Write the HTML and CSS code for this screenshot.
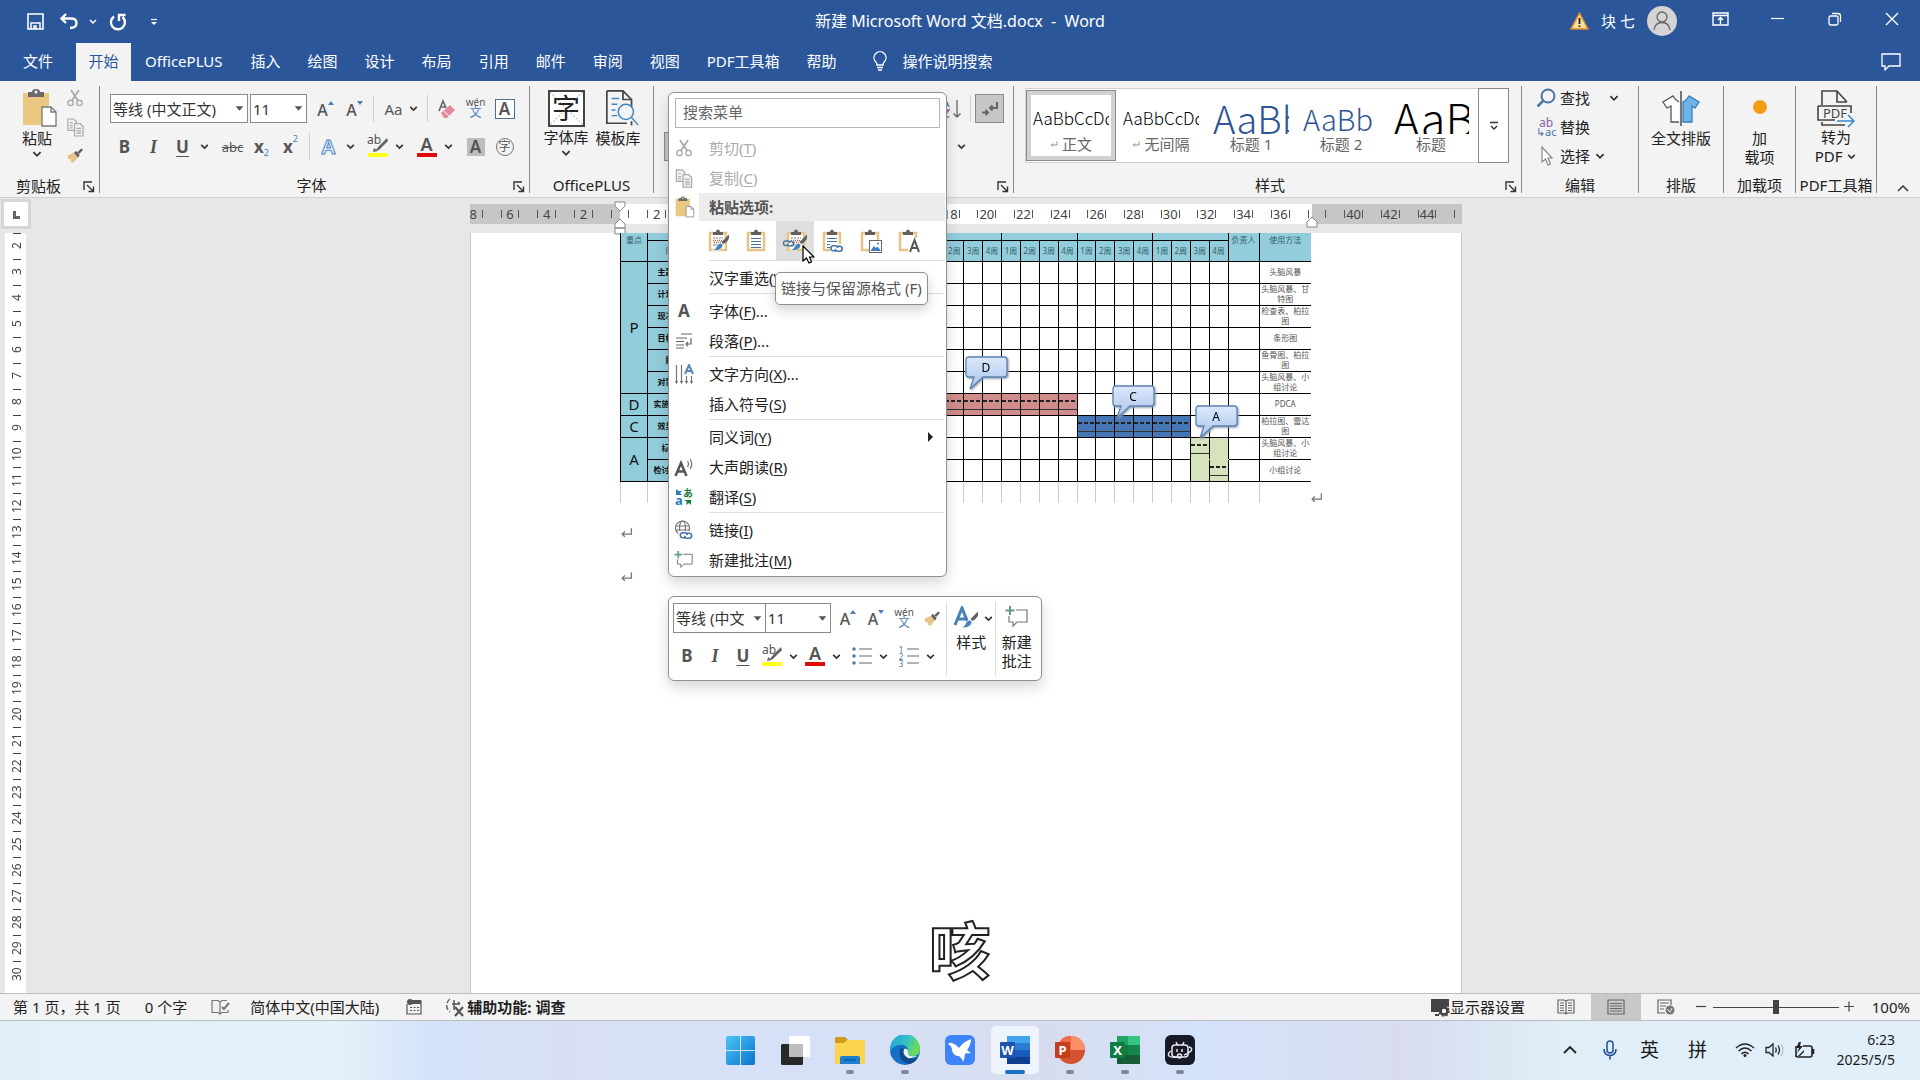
FILE: index.html
```html
<!DOCTYPE html>
<html lang="zh-CN">
<head>
<meta charset="utf-8">
<title>新建 Microsoft Word 文档.docx - Word</title>
<link rel="stylesheet" href="styles.css">
</head>
<body>
<svg class="defs" aria-hidden="true">
  <symbol id="chev" viewBox="0 0 10 10"><path d="M2 3.500 5 6.500 8 3.500" fill="none" stroke="#333" stroke-width="1.500"/></symbol>
  <symbol id="tri" viewBox="0 0 10 10"><path d="M1.500 3H8.500L5 7Z" fill="#555"/></symbol>
  <symbol id="launch" viewBox="0 0 12 12"><path d="M1 9V1H9M4 4 10 10M10.500 5.500V10.500H5.500" fill="none" stroke="#333" stroke-width="1.400"/></symbol>
  <symbol id="cut" viewBox="0 0 18 20"><g fill="none" stroke="#aaa" stroke-width="1.500"><circle cx="4" cy="15.500" r="3"/><circle cx="14" cy="15.500" r="3"/><path d="M5.500 13 13.500 1M12.500 13 4.500 1" stroke-width="2"/></g></symbol>
  <symbol id="copy" viewBox="0 0 18 20"><g fill="#f3f3f3" stroke="#aaa" stroke-width="1.300"><path d="M1 1H7L10 4V13H1Z"/><path d="M8 6H14L17 9V19H8Z"/><path d="M3 5H6M3 8H6M3 10.500H6M10 11H15M10 13.500H15M10 16H15"/></g></symbol>
  <symbol id="brush" viewBox="0 0 18 18"><path d="M1 9 8 6 12 11 7 17 4 15 5 13 2 13Z" fill="#e8c287"/><path d="M8 6 10 4 14 9 12 11ZM11.500 5.500 15.500 1.500 17.500 3 13.500 7.500Z" fill="#5d5d5d"/></symbol>
  <symbol id="paste" viewBox="0 0 36 40"><path d="M1 5H27V18H20V37H1Z" fill="#ebc882"/><path d="M6 9V4H10Q10 1 14 1Q18 1 18 4H22V9Z" fill="#6a6a6a"/><circle cx="14" cy="4" r="1.500" fill="#f3f3f3"/><path d="M20 19H29L34 24V38H20Z" fill="#fff" stroke="#777" stroke-width="1.300"/><path d="M29 19V24H34" fill="none" stroke="#777" stroke-width="1.300"/></symbol>
  <symbol id="clip" viewBox="0 0 22 24"><path d="M2 4H18V21H2Z" fill="#fff" stroke="#e6c487" stroke-width="2.500"/><path d="M5 6V3H8Q8 .5 10 .5Q12 .5 12 3H15V6Z" fill="#5f5f5f"/></symbol>
  <symbol id="lines" viewBox="0 0 22 24"><path d="M5 9.500H15M5 12.500H15M5 15.500H15M5 18.500H15" stroke="#4b6f95" stroke-width="1.200"/></symbol>
  <symbol id="dots" viewBox="0 0 22 24"><path d="M5 9H15" stroke="#777" stroke-dasharray="2 1"/><path d="M5 11.500H15M6 13.500H15" stroke="#b0664f" stroke-width="1.600" stroke-dasharray="1 1"/><path d="M5 16H10" stroke="#777"/></symbol>
  <symbol id="minibrush" viewBox="0 0 22 24"><path d="M21 5.500Q22 12 15.500 15L13.500 13Z" fill="#5f5f5f"/><path d="M13 14Q16 15 14.500 18Q11 23 4 21.500Q8 20 8.500 17.500Q10 14 13 14Z" fill="#4a7fb8" stroke="#fff" stroke-width=".8"/></symbol>
  <symbol id="link" viewBox="0 0 16 10"><g fill="none" stroke="#4375a8" stroke-width="1.800"><path d="M7.500 7.500H4A2.800 2.800 0 0 1 4 2H7Q9 2 9.500 4.500"/><path d="M8.500 2.500H12A2.800 2.800 0 0 1 12 8H9Q7 8 6.500 5.500"/></g></symbol>
  <symbol id="comment" viewBox="0 0 24 22"><path d="M11 4H22V16H12L8 20V16H4V10" fill="none" stroke="#777" stroke-width="1.200"/><path d="M5 0V9M.500 4.500H9.500" stroke="#5d9c85" stroke-width="2"/></symbol>
  <symbol id="hl" viewBox="0 0 22 20"><path d="M12 9 20 1 21 4 12 13 8 14Z" fill="#666"/><path d="M7 11 11 14 6 15Z" fill="#666"/><rect x="1" y="16" width="20" height="4" fill="#ffff1a"/></symbol>
  <symbol id="pilcrow" viewBox="0 0 12 10"><path d="M10.500 1V6.500H2M4.500 4 2 6.500 4.500 9" fill="none" stroke="#777" stroke-width="1.200"/></symbol>
</svg>

<header class="top">
  <div class="titlebar">
    <div class="quick">
      <button class="q" aria-label="保存"><svg width="17" height="17" viewBox="0 0 17 17"><path d="M1 1H16V16H1Z" fill="none" stroke="#fff" stroke-width="1.600"/><path d="M4 16V10H13V16M7 16V13H9V16" fill="none" stroke="#fff" stroke-width="1.500"/></svg></button>
      <button class="q" aria-label="撤消"><svg width="18" height="17" viewBox="0 0 18 17"><path d="M6 1 1.500 5.500 6 10M2 5.500H11Q16.500 5.500 16.500 10Q16.500 15 10 15" fill="none" stroke="#fff" stroke-width="2.300"/></svg></button>
      <button class="dd" aria-label="撤消选项"><svg width="10" height="10" viewBox="0 0 10 10"><path d="M2 3 5 6 8 3" fill="none" stroke="#fff" stroke-width="1.500"/></svg></button>
      <button class="q" aria-label="重复"><svg width="18" height="18" viewBox="0 0 18 18"><path d="M5 3.500A7 7 0 1 0 13.500 4M10 8V2H16.500" fill="none" stroke="#fff" stroke-width="2.400"/></svg></button>
      <button class="q" aria-label="自定义快速访问工具栏"><svg width="10" height="10" viewBox="0 0 10 10"><path d="M2 2.500H8" stroke="#fff" stroke-width="1.200"/><path d="M2 5H8L5 8Z" fill="#fff"/></svg></button>
    </div>
    <h1 class="doc-title">新建 Microsoft Word 文档.docx&nbsp; -&nbsp; Word</h1>
    <div class="account">
      <svg width="19" height="18" viewBox="0 0 19 18"><path d="M9.500 1 18 17H1Z" fill="#fbdf9c" stroke="#d98b2b" stroke-width="1.500"/><path d="M9.500 6V12M9.500 13.500V15" stroke="#222" stroke-width="1.800"/></svg>
      <span>块 七</span>
      <svg width="30" height="30" viewBox="0 0 30 30"><circle cx="15" cy="15" r="15" fill="#d4d4d4"/><g fill="none" stroke="#666" stroke-width="1.300"><circle cx="15" cy="11" r="5"/><path d="M7 24Q8 16.500 15 16.500T23 24"/></g></svg>
    </div>
    <div class="winctl">
      <button aria-label="功能区显示选项"><svg width="17" height="14" viewBox="0 0 17 14"><path d="M1 1H16V13H1ZM1 3.500H16M8.500 12V6M6 8 8.500 5.500 11 8" fill="none" stroke="#fff" stroke-width="1.400"/></svg></button>
      <button aria-label="最小化"><svg width="14" height="14" viewBox="0 0 14 14"><path d="M0 6.500H13" stroke="#fff" stroke-width="1.200"/></svg></button>
      <button aria-label="向下还原"><svg width="14" height="14" viewBox="0 0 14 14"><rect x="1" y="4" width="9" height="9" rx="1.500" fill="none" stroke="#fff" stroke-width="1.300"/><path d="M4 1.500H10Q12.500 1.500 12.500 4V10" fill="none" stroke="#fff" stroke-width="1.300"/></svg></button>
      <button aria-label="关闭"><svg width="14" height="14" viewBox="0 0 14 14"><path d="M1 1 13 13M13 1 1 13" stroke="#fff" stroke-width="1.400"/></svg></button>
    </div>
  </div>
  <nav class="tabs">
    <a class="tab file" href="#">文件</a><a class="tab cur" href="#">开始</a><a class="tab plus" href="#">OfficePLUS</a><a class="tab" href="#">插入</a><a class="tab" href="#">绘图</a><a class="tab" href="#">设计</a><a class="tab" href="#">布局</a><a class="tab" href="#">引用</a><a class="tab" href="#">邮件</a><a class="tab" href="#">审阅</a><a class="tab" href="#">视图</a><a class="tab" href="#">PDF工具箱</a><a class="tab" href="#">帮助</a>
    <a class="tab tell" href="#"><svg width="16" height="20" viewBox="0 0 16 20"><path d="M5 14Q5 12 3 10A6 6 0 1 1 13 10Q11 12 11 14Z" fill="none" stroke="#fff" stroke-width="1.300"/><path d="M5 16.500H11M6 19H10" stroke="#fff" stroke-width="1.300"/></svg>操作说明搜索</a>
    <button class="notes" aria-label="批注"><svg width="20" height="18" viewBox="0 0 20 18"><path d="M1 1H19V13H8L4 17V13H1Z" fill="none" stroke="#fff" stroke-width="1.300"/></svg></button>
  </nav>
</header>

<section class="ribbon">
  <div class="group g-clip">
    <div class="tools">
      <button class="big paste"><svg width="36" height="40"><use href="#paste"/></svg><span>粘贴</span><svg width="12" height="12"><use href="#chev"/></svg></button>
      <div class="stack">
        <button aria-label="剪切"><svg width="16" height="18"><use href="#cut"/></svg></button>
        <button aria-label="复制"><svg width="17" height="19"><use href="#copy"/></svg></button>
        <button aria-label="格式刷"><svg width="18" height="17"><use href="#brush"/></svg></button>
      </div>
    </div>
    <div class="cap">剪贴板</div><button class="launch" aria-label="剪贴板选项"><svg width="12" height="12"><use href="#launch"/></svg></button>
  </div>
  <div class="group g-font">
    <div class="rows">
      <div class="row">
        <div class="combo wide"><input type="text" value="等线 (中文正文)" aria-label="字体"><svg width="10" height="10"><use href="#tri"/></svg></div>
        <div class="combo"><input type="text" value="11" aria-label="字号"><svg width="10" height="10"><use href="#tri"/></svg></div>
        <button class="ib"><span class="grow">A<svg width="6" height="4" viewBox="0 0 6 4"><path d="M0 4H6L3 0Z" fill="#4a7fb8"/></svg></span></button>
        <button class="ib"><span class="grow">A<svg width="6" height="4" viewBox="0 0 6 4"><path d="M0 0H6L3 4Z" fill="#4a7fb8"/></svg></span></button>
        <i class="vs"></i>
        <button class="ib tight">Aa</button><button class="dd" aria-label="更改大小写"><svg width="11" height="11"><use href="#chev"/></svg></button>
        <i class="vs"></i>
        <button class="ib" aria-label="清除格式"><svg width="20" height="20" viewBox="0 0 20 20"><path d="M2 12 6 2 9 9M3.500 8H8" fill="none" stroke="#666" stroke-width="1.600"/><path d="M4 14 13 6 18 11 10 19H7Z" fill="#e58a9c"/><path d="M6.500 12 12 17" stroke="#fff"/></svg></button>
        <button class="ib wen"><small>wén</small><b>文</b></button>
        <button class="ib"><span class="boxed">A</span></button>
      </div>
      <div class="row">
        <button class="ib"><b>B</b></button><button class="ib"><b class="it">I</b></button><button class="ib"><b class="un">U</b></button><button class="dd" aria-label="下划线"><svg width="11" height="11"><use href="#chev"/></svg></button>
        <button class="ib strike">abc</button><button class="ib sub"><b>x</b><sub>2</sub></button><button class="ib sub"><b>x</b><sup>2</sup></button>
        <i class="vs"></i>
        <button class="ib"><span class="fx">A</span></button><button class="dd" aria-label="文本效果"><svg width="11" height="11"><use href="#chev"/></svg></button>
        <button class="ib hl"><small>ab</small><svg width="22" height="20"><use href="#hl"/></svg></button><button class="dd" aria-label="突出显示颜色"><svg width="11" height="11"><use href="#chev"/></svg></button>
        <button class="ib"><span class="fc">A</span></button><button class="dd" aria-label="字体颜色"><svg width="11" height="11"><use href="#chev"/></svg></button>
        <button class="ib"><span class="shade">A</span></button><button class="ib"><span class="circ">字</span></button>
      </div>
    </div>
    <div class="cap">字体</div><button class="launch" aria-label="字体选项"><svg width="12" height="12"><use href="#launch"/></svg></button>
  </div>
  <div class="group g-plus">
    <div class="tools">
      <button class="big"><span class="zi">字<svg width="36" height="36" viewBox="0 0 36 36"><path d="M0 0 36 36M36 0 0 36" stroke="#777" stroke-width=".8" stroke-dasharray="2 2"/></svg></span><span>字体库</span><svg width="12" height="12"><use href="#chev"/></svg></button>
      <button class="big tpl"><svg width="36" height="40" viewBox="0 0 36 40"><path d="M27 33V37M1 1H18L27 10V18M18 1V10H27M1 1V35H22" fill="none" stroke="#444" stroke-width="1.800"/><g fill="none" stroke="#3c87c4" stroke-width="1.500"><path d="M6 9H14M6 15H12M6 21H10M6 27H12"/><circle cx="21" cy="23" r="8"/><path d="M27 29 34 37"/></g></svg><span>模板库</span></button>
    </div>
    <div class="cap">OfficePLUS</div>
  </div>
  <div class="group g-para">
    <div class="rows end">
      <div class="row">
        <button class="ib" aria-label="排序"><svg width="22" height="22" viewBox="0 0 22 22"><path d="M2 9 5 2 8 9M3 7H7" fill="none" stroke="#4a7fb8" stroke-width="1.400"/><path d="M2.500 12H8L2.500 19H8" fill="none" stroke="#8b5fa8" stroke-width="1.400"/><path d="M16 2V19M12.500 15.500 16 19 19.500 15.500" fill="none" stroke="#666" stroke-width="1.300"/></svg></button>
        <i class="vs"></i>
        <button class="ib mark" aria-label="显示编辑标记"><svg width="18" height="18" viewBox="0 0 18 18"><path d="M16 2V8H9M11.500 5.500 9 8 11.500 10.500M1 12.500H7M4.500 10 7 12.500 4.500 15" fill="none" stroke="#666" stroke-width="2"/></svg></button>
      </div>
      <div class="row lower"><button class="ib on" aria-label="左对齐"></button><button class="dd" aria-label="边框"><svg width="11" height="11"><use href="#chev"/></svg></button></div>
    </div>
    <div class="cap"></div><button class="launch" aria-label="段落选项"><svg width="12" height="12"><use href="#launch"/></svg></button>
  </div>
  <div class="group g-style">
    <div class="gallery">
      <button class="st on"><span class="pv">AaBbCcDd</span><span class="nm"><svg width="8" height="8"><use href="#pilcrow"/></svg> 正文</span></button>
      <button class="st"><span class="pv">AaBbCcDd</span><span class="nm"><svg width="8" height="8"><use href="#pilcrow"/></svg> 无间隔</span></button>
      <button class="st"><span class="pv h1">AaBb</span><span class="nm">标题 1</span></button>
      <button class="st"><span class="pv h2">AaBb</span><span class="nm">标题 2</span></button>
      <button class="st"><span class="pv h0">AaBb</span><span class="nm">标题</span></button>
      <button class="more" aria-label="其他样式"><svg width="12" height="12" viewBox="0 0 12 12"><path d="M2 2.500H10M3 6 6 9 9 6" fill="none" stroke="#333" stroke-width="1.300"/></svg></button>
    </div>
    <div class="cap">样式</div><button class="launch" aria-label="样式选项"><svg width="12" height="12"><use href="#launch"/></svg></button>
  </div>
  <div class="group g-edit">
    <div class="list">
      <button><svg width="20" height="20" viewBox="0 0 20 20"><circle cx="12" cy="8" r="6.500" fill="none" stroke="#4a76a5" stroke-width="2"/><path d="M7.500 12.500 1.500 18.500" stroke="#4a76a5" stroke-width="2.500"/></svg><span>查找</span><svg class="far" width="12" height="12"><use href="#chev"/></svg></button>
      <button><span class="rep"><b>ab</b><i>↳ac</i></span><span>替换</span></button>
      <button><svg width="20" height="20" viewBox="0 0 20 20"><path d="M6 1V16L9.500 13 12 19 14.500 18 12 12H16Z" fill="#fff" stroke="#888" stroke-width="1.200"/></svg><span>选择</span><svg width="12" height="12"><use href="#chev"/></svg></button>
    </div>
    <div class="cap">编辑</div>
  </div>
  <div class="group g-lay">
    <div class="tools"><button class="big"><svg width="38" height="38" viewBox="0 0 38 38"><g stroke-width="1.300"><path d="M17 12Q13 10 11 6L1 12 5 18 9 16V32H17" fill="#fff" stroke="#555"/><path d="M21 12Q25 10 27 6L37 12 33 18 30 16V32H21Z" fill="#6db5e8" stroke="#3a7eb8"/><path d="M19 1V36" stroke="#333"/></g></svg><span>全文排版</span></button></div>
    <div class="cap">排版</div>
  </div>
  <div class="group g-add">
    <div class="tools"><button class="big"><svg width="36" height="38" viewBox="0 0 36 38"><circle cx="18" cy="17" r="7" fill="#f39c12"/></svg><span>加<br>载项</span></button></div>
    <div class="cap">加载项</div>
  </div>
  <div class="group g-pdf">
    <div class="tools"><button class="big"><span class="pdf">PDF<svg width="38" height="38" viewBox="0 0 38 38"><g fill="none" stroke="#444" stroke-width="1.600"><path d="M5 15V1H20L30 12M20 1V12H30M1 16H34V23M1 16V30H18M5 32V35H28"/></g><path d="M20 31H37M31 25 37 31 31 37" fill="none" stroke="#3c87c4" stroke-width="1.500"/></svg></span><span>转为<br>PDF <svg width="11" height="11"><use href="#chev"/></svg></span></button></div>
    <div class="cap">PDF工具箱</div>
  </div>
  <div class="collapse"><button aria-label="折叠功能区"><svg width="14" height="10" viewBox="0 0 14 10"><path d="M2 8 7 3 12 8" fill="none" stroke="#333" stroke-width="1.500"/></svg></button></div>
</section>

<main class="work">
  <div class="left">
    <div class="corner"><i></i></div>
    <div class="vruler" id="vruler"></div>
  </div>
  <div class="center">
    <div class="hruler" id="hruler">
      <svg class="grip" width="12" height="34" viewBox="0 0 12 34"><path d="M1 1H11V5L6 10 1 5ZM6 18 11 23V27H1V23ZM1 27H11V33H1Z" fill="#fff" stroke="#888"/></svg>
      <svg class="grip r" width="12" height="12" viewBox="0 0 12 12"><path d="M6 1 11 6V11H1V6Z" fill="#fff" stroke="#888"/></svg>
    </div>
    <article class="page">
      <div class="sheet">
        <table class="gantt">
          <colgroup><col class="c-phase"><col class="c-step"><col span="28"><col class="c-who"><col class="c-how"></colgroup>
          <thead id="ghead"></thead>
          <tbody id="gbody"></tbody>
        </table>
        <svg class="rowend" width="13" height="11"><use href="#pilcrow"/></svg>
        <svg class="call d" width="44" height="36" viewBox="0 0 44 36"><path d="M4 1H39Q42 1 42 4V18Q42 21 39 21H18L5 33 9 21H4Q1 21 1 18V4Q1 1 4 1Z" fill="url(#cg)" stroke="#5f83b5" stroke-width="1.300"/><text x="21" y="16" text-anchor="middle">D</text><defs><linearGradient id="cg" x1="0" y1="0" x2="0" y2="1"><stop offset="0" stop-color="#dce8fa"/><stop offset="1" stop-color="#a9c4ec"/></linearGradient></defs></svg>
        <svg class="call c" width="44" height="36" viewBox="0 0 44 36"><path d="M4 1H39Q42 1 42 4V18Q42 21 39 21H18L5 33 9 21H4Q1 21 1 18V4Q1 1 4 1Z" fill="url(#cg)" stroke="#5f83b5" stroke-width="1.300"/><text x="21" y="16" text-anchor="middle">C</text></svg>
        <svg class="call a" width="44" height="36" viewBox="0 0 44 36"><path d="M4 1H39Q42 1 42 4V18Q42 21 39 21H18L5 33 9 21H4Q1 21 1 18V4Q1 1 4 1Z" fill="url(#cg)" stroke="#5f83b5" stroke-width="1.300"/><text x="21" y="16" text-anchor="middle">A</text></svg>
      </div>
      <p class="para"><svg width="13" height="11"><use href="#pilcrow"/></svg></p>
      <p class="para"><svg width="13" height="11"><use href="#pilcrow"/></svg></p>
    </article>
  </div>
  <div class="caption">咳</div>
</main>

<footer class="status">
  <span class="s1">第 1 页，共 1 页</span>
  <span class="s2">0 个字</span>
  <svg class="s3" width="19" height="16" viewBox="0 0 19 16"><path d="M9 3V15L7 13.500H1V1.500H7ZM9 3 11 1.500H16M9 15 11 13.500H17V11" fill="none" stroke="#777" stroke-width="1.200"/><path d="M11 8 13 10 18 4" fill="none" stroke="#777" stroke-width="2"/></svg>
  <span class="s4">简体中文(中国大陆)</span>
  <svg class="s5" width="16" height="16" viewBox="0 0 16 16"><path d="M1 5V15H15V2H7" fill="none" stroke="#555" stroke-width="1.200"/><path d="M6 1H15V5H6Z" fill="#555"/><circle cx="4" cy="3" r="3" fill="#555"/><path d="M4 8.500H13M4 11.500H13" stroke="#555" stroke-dasharray="2 1.500"/></svg>
  <svg class="s6" width="20" height="19" viewBox="0 0 20 19"><path d="M5 1A8 8 0 0 0 5 14" fill="none" stroke="#666" stroke-width="1.500" stroke-dasharray="5 2"/><path d="M9 2V7M7 6H15M15 6 13 4M9 7V12" fill="none" stroke="#555" stroke-width="1.500"/><path d="M10 9 18 18M18 9 10 18" stroke="#555" stroke-width="2.200"/></svg>
  <b>辅助功能: 调查</b>
  <span class="grow-x"></span>
  <svg width="20" height="19" viewBox="0 0 20 19"><path d="M1 1H19V9Q12 7 10 14H1Z" fill="#444"/><path d="M5 17H9" stroke="#444" stroke-width="2"/><circle cx="14" cy="13" r="3.500" fill="none" stroke="#444" stroke-width="2.600"/><circle cx="14" cy="13" r="5" fill="none" stroke="#444" stroke-width="1.600" stroke-dasharray="2 1.900"/></svg>
  <span>显示器设置</span>
  <button class="view v1" aria-label="阅读视图"><svg width="18" height="16" viewBox="0 0 18 16"><path d="M9 2V15M9 2 7 1H1V14H8L9 15 10 14H17V1H11ZM3 4H7M3 6.500H7M3 9H7M3 11.500H7M11 4H15M11 6.500H15M11 9H15M11 11.500H15" fill="none" stroke="#666" stroke-width="1.200"/></svg></button>
  <button class="view on" aria-label="页面视图"><svg width="18" height="16" viewBox="0 0 18 16"><path d="M1 1H17V15H1ZM3 4.500H15M3 7H15M3 9.500H15M3 12H15" fill="none" stroke="#666" stroke-width="1.200"/></svg></button>
  <button class="view" aria-label="Web 版式视图"><svg width="18" height="16" viewBox="0 0 18 16"><path d="M8 14H1V1H14V6M3 4H12M3 7H9M3 10H7" fill="none" stroke="#666" stroke-width="1.200"/><circle cx="13" cy="11" r="4.500" fill="#777"/><path d="M10 10 13 13 15 9" fill="none" stroke="#eee"/></svg></button>
  <button class="zoomb" aria-label="缩小"><svg width="12" height="12" viewBox="0 0 12 12"><path d="M1 5.500H11" stroke="#444" stroke-width="1.200"/></svg></button>
  <input class="zoom" type="range" min="0" max="100" value="50" aria-label="显示比例">
  <button class="zoomb" aria-label="放大"><svg width="12" height="12" viewBox="0 0 12 12"><path d="M1 5.500H11M6 .5V10.500" stroke="#444" stroke-width="1.200"/></svg></button>
  <span class="pct">100%</span>
</footer>

<div class="taskbar">
  <div class="apps">
    <button aria-label="开始"><svg width="29" height="29" viewBox="0 0 29 29"><path d="M0 2Q0 0 2 0H14V14H0ZM15 0H27Q29 0 29 2V14H15ZM0 15H14V29H2Q0 29 0 27ZM15 15H29V27Q29 29 27 29H15Z" fill="url(#wg)"/><defs><linearGradient id="wg" x1="0" y1="0" x2="1" y2="1"><stop offset="0" stop-color="#4cc5f5"/><stop offset="1" stop-color="#0a73d0"/></linearGradient></defs></svg></button>
    <button aria-label="任务视图"><svg width="29" height="29" viewBox="0 0 29 29"><rect x="0" y="8" width="22" height="21" rx="1.500" fill="#282828"/><rect x="8" y="0" width="21" height="21" rx="1.500" fill="#fff"/><path d="M8 8H22V21H8Z" fill="#bdbdbd"/></svg></button>
    <button class="run" aria-label="文件资源管理器"><svg width="30" height="29" viewBox="0 0 30 29"><path d="M0 2Q0 1 1 1H10L13 4H12V8H0Z" fill="#d19a18"/><path d="M0 7H9L12 4H30V28H0Z" fill="#fbd34d"/><path d="M5 28V22Q5 20 7 20H23Q25 20 25 22V28Z" fill="#1b7fce"/><path d="M9 24H21" stroke="#0c5a9e" stroke-width="1.500"/></svg></button>
    <button class="run" aria-label="Edge"><svg width="30" height="30" viewBox="0 0 30 30"><defs><linearGradient id="eg" x1="0" y1="0" x2="1" y2=".4"><stop offset="0" stop-color="#1f9fe0"/><stop offset=".6" stop-color="#33c3c3"/><stop offset="1" stop-color="#6ddc57"/></linearGradient></defs><circle cx="15" cy="15" r="15" fill="#1470c4"/><path d="M0 14A15 15 0 0 1 30 14Q30 21 23 21Q18 21 17 18Q19 15 17 12Q14 9 9 10Q3 11 0 16Z" fill="url(#eg)"/><path d="M10 14Q7 27 20 29Q26 27 28 22Q22 25 17 22Q13 19 14 14Q12 12 10 14Z" fill="#104a8c"/><path d="M14 14Q12 20 18 23Q23 24 29 20Q26 22 21 21Q17 20 18 17Q18 13 14 14Z" fill="#e6f1fb"/></svg></button>
    <button aria-label="飞鸟"><svg width="30" height="30" viewBox="0 0 30 30"><rect width="30" height="30" rx="6" fill="#3f83f8"/><path d="M3 9Q5 7 8 8.500Q12 10 14 13Q18 7 26 4Q26 10 22 15L26 18 20 18.500Q20 23 18 27Q17 23 14 21Q8 21 7 15Q7 11 3 9Z" fill="#fff"/></svg></button>
    <button class="run cur" aria-label="Word"><svg width="30" height="30" viewBox="0 0 30 30"><path d="M7 1H30V8H7Z" fill="#41a5ee"/><path d="M7 8H30V15H7Z" fill="#2b7cd3"/><path d="M7 15H30V22H7Z" fill="#185abd"/><path d="M7 22H30V29H7Z" fill="#103f91"/><rect y="7" width="15" height="16" rx="1" fill="#1d55b0"/><text x="7.500" y="20" text-anchor="middle">W</text></svg></button>
    <button class="run" aria-label="PowerPoint"><svg width="30" height="30" viewBox="0 0 30 30"><circle cx="16" cy="15" r="14" fill="#d35230"/><path d="M16 1A14 14 0 0 0 2 15H16Z" fill="#ed6c47"/><path d="M16 1A14 14 0 0 1 30 15H16Z" fill="#ff8f6b"/><rect y="7" width="15" height="16" rx="1" fill="#c43e1c"/><text x="7.500" y="20" text-anchor="middle">P</text></svg></button>
    <button class="run" aria-label="Excel"><svg width="30" height="30" viewBox="0 0 30 30"><path d="M7 1H30V29H7Z" fill="#21a366"/><path d="M18 1H30V10H18Z" fill="#33c481"/><path d="M7 10H18V20H7Z" fill="#107c41"/><path d="M7 20H30V29H7Z" fill="#185c37"/><path d="M18 10H30V20H18Z" fill="#15864a"/><rect y="7" width="15" height="16" rx="1" fill="#107c41"/><text x="7.500" y="20" text-anchor="middle">X</text></svg></button>
    <button class="run" aria-label="哔哩哔哩"><svg width="30" height="30" viewBox="0 0 30 30"><rect width="30" height="30" rx="6" fill="#171a26"/><g fill="none" stroke="#e8e8ee" stroke-width="1.500"><rect x="7" y="10" width="16" height="12" rx="3"/><path d="M11 7 12.500 10M19 7 17.500 10M12 14V17M17 14V17M24 12Q28 13 26 16Q23 19 19 20M6 16Q2 19 4 21Q7 23 12 22"/><circle cx="14.500" cy="21" r="2"/></g></svg></button>
  </div>
  <div class="tray">
    <svg width="14" height="10" viewBox="0 0 14 10"><path d="M1 8 7 2 13 8" fill="none" stroke="#222" stroke-width="1.800"/></svg>
    <svg width="16" height="20" viewBox="0 0 16 20"><rect x="5" y="1" width="6" height="12" rx="3" fill="none" stroke="#24509a" stroke-width="1.500"/><path d="M2 9Q2 15.500 8 15.500T14 9M8 15.500V19.500" fill="none" stroke="#24509a" stroke-width="1.600"/></svg>
    <span class="ime">英</span><span class="ime">拼</span>
    <div class="sys">
      <svg width="20" height="16" viewBox="0 0 20 16"><g fill="none" stroke="#222" stroke-width="1.500"><path d="M1 6Q10-2 19 6M3.500 9Q10 3 16.500 9M6.500 12Q10 8.500 13.500 12"/></g><circle cx="10" cy="13.500" r="1.500" fill="#222"/></svg>
      <svg width="20" height="16" viewBox="0 0 20 16"><path d="M1 5.500H4L8 2V14L4 10.500H1Z" fill="none" stroke="#222" stroke-width="1.300"/><path d="M10.500 5.500Q12 8 10.500 10.500M13 3.500Q16 8 13 12.500" fill="none" stroke="#222" stroke-width="1.300"/><path d="M16 2Q20 8 16 14" fill="none" stroke="#bbb" stroke-width="1.200"/></svg>
      <svg width="20" height="17" viewBox="0 0 20 17"><path d="M8 4H15Q17 4 17 6V13Q17 15 15 15H3Q1 15 1 13V10M1 4V15M18.500 7V12" fill="none" stroke="#222" stroke-width="1.600"/><path d="M4 0 1 6H4L2 11 8 4H5L6 0ZM3 14 9 8V10L5 14Z" fill="#222"/></svg>
    </div>
    <div class="clock"><div>6:23</div><div>2025/5/5</div></div>
  </div>
</div>

<div class="menu" role="menu">
  <input class="find" type="text" placeholder="搜索菜单" aria-label="搜索菜单">
  <button class="mi off"><svg width="16" height="18"><use href="#cut"/></svg><span>剪切(<u>T</u>)</span></button>
  <button class="mi off"><svg width="17" height="19"><use href="#copy"/></svg><span>复制(<u>C</u>)</span></button>
  <div class="mh"><svg width="20" height="22" viewBox="0 0 36 40"><use href="#paste"/></svg><b>粘贴选项:</b></div>
  <div class="opts">
    <button aria-label="保留源格式"><svg width="22" height="24"><use href="#clip"/><use href="#dots"/><use href="#minibrush"/></svg></button>
    <button aria-label="使用目标样式"><svg width="22" height="24"><use href="#clip"/><use href="#lines"/></svg></button>
    <button class="on" aria-label="链接与保留源格式"><svg width="26" height="24" viewBox="-4 0 26 24"><use href="#clip" width="22" height="24"/><use href="#dots" width="22" height="24"/><use href="#minibrush" width="22" height="24"/><use href="#link" x="-4" y="10" width="13" height="9"/></svg></button>
    <button aria-label="链接与使用目标格式"><svg width="22" height="24"><use href="#clip"/><use href="#lines"/><rect x="8" y="15" width="14" height="9" fill="#fff"/><use href="#link" x="7" y="15" width="15" height="9"/></svg></button>
    <button aria-label="图片"><svg width="22" height="24"><use href="#clip"/><rect x="9.500" y="11.500" width="12" height="12" fill="#fff" stroke="#666"/><path d="M11 21 14 17 16 19 17.500 17.500 20.500 21V22H11Z" fill="#3f7fc0"/><circle cx="18" cy="14.500" r="1" fill="#3f7fc0"/></svg></button>
    <button aria-label="只保留文本"><svg width="22" height="24"><use href="#clip"/><rect x="10" y="9" width="12" height="15" fill="#fff"/><path d="M12 23 16.500 11 21 23M13.500 19H19.500" fill="none" stroke="#555" stroke-width="2"/></svg></button>
  </div>
  <hr>
  <button class="mi"><i></i><span>汉字重选(<u>V</u>)</span></button>
  <hr>
  <button class="mi"><i class="ga">A</i><span>字体(<u>F</u>)...</span></button>
  <button class="mi"><svg width="18" height="16" viewBox="0 0 18 16"><path d="M6 1H17M1 5H12M1 8.500H9M1 12H9M1 15H9M16 5V11H11M13 9 11 11 13 13.500" fill="none" stroke="#666" stroke-width="1.200"/></svg><span>段落(<u>P</u>)...</span></button>
  <hr>
  <button class="mi"><svg width="18" height="20" viewBox="0 0 18 20"><path d="M1.500 1V19M6.500 1V19M11.500 12V19M16.500 12V19" stroke="#777" stroke-width="1.200"/><path d="M0 17H3L1.500 20ZM5 17H8L6.500 20ZM10 17H13L11.500 20ZM15 17H18L16.500 20Z" fill="#666"/><path d="M10 10 14 1 18 10M11.500 7H16.500" fill="none" stroke="#5a86b5" stroke-width="2"/></svg><span>文字方向(<u>X</u>)...</span></button>
  <button class="mi"><i></i><span>插入符号(<u>S</u>)</span></button>
  <hr>
  <button class="mi"><i></i><span>同义词(<u>Y</u>)</span><svg class="sub-arrow" width="6" height="10" viewBox="0 0 6 10"><path d="M0 0 5 5 0 10Z" fill="#222"/></svg></button>
  <button class="mi"><svg width="19" height="19" viewBox="0 0 19 19"><path d="M1 18 6.500 5 12 18M3.500 13.500H9.500" fill="none" stroke="#555" stroke-width="2.500"/><path d="M13 3Q15 6 13 9M15.500 1Q19 6 15.500 11" fill="none" stroke="#777" stroke-width="1.300"/></svg><span>大声朗读(<u>R</u>)</span></button>
  <button class="mi"><svg class="tr" width="18" height="18" viewBox="0 0 18 18"><text class="ja" x="8" y="9">あ</text><text class="la" x="0" y="17">a</text><path d="M1 1V7H7L5 5 7 3H4L2 2Z" fill="#2b7cb8"/><path d="M9 12H16V17L14 15 11 17 12 14Z" fill="#18803a"/></svg><span>翻译(<u>S</u>)</span></button>
  <hr>
  <button class="mi"><svg width="19" height="20" viewBox="0 0 19 20"><g fill="none" stroke="#777" stroke-width="1.200"><circle cx="8" cy="8" r="7"/><ellipse cx="8" cy="8" rx="3" ry="7"/><path d="M1 6H15M1 10H15"/></g><rect x="4" y="11" width="15" height="9" fill="#fff"/><use href="#link" x="4" y="11" width="15" height="9"/></svg><span>链接(<u>I</u>)</span></button>
  <button class="mi"><svg width="20" height="18"><use href="#comment"/></svg><span>新建批注(<u>M</u>)</span></button>
</div>
<div class="tip" role="tooltip">链接与保留源格式 (F)</div>
<svg class="cursor" width="13" height="19" viewBox="0 0 13 19"><path d="M1 1V16L4.500 13 7 18 9.500 17 7.500 12H12Z" fill="#fff" stroke="#000" stroke-width="1.200"/></svg>

<div class="mini">
  <div class="mrows">
    <div class="row">
      <div class="combo"><input type="text" value="等线 (中文" aria-label="字体"><svg width="12" height="12"><use href="#tri"/></svg></div><div class="combo num"><input type="text" value="11" aria-label="字号"><svg width="12" height="12"><use href="#tri"/></svg></div>
      <button class="ib"><span class="grow">A<svg width="6" height="4" viewBox="0 0 6 4"><path d="M0 4H6L3 0Z" fill="#4a7fb8"/></svg></span></button>
      <button class="ib"><span class="grow">A<svg width="6" height="4" viewBox="0 0 6 4"><path d="M0 0H6L3 4Z" fill="#4a7fb8"/></svg></span></button>
      <button class="ib wen"><small>wén</small><b>文</b></button>
      <button class="ib" aria-label="格式刷"><svg width="18" height="17"><use href="#brush"/></svg></button>
    </div>
    <div class="row">
      <button class="ib"><b>B</b></button><button class="ib"><b class="it">I</b></button><button class="ib"><b class="un">U</b></button>
      <button class="ib hl"><small>ab</small><svg width="22" height="20"><use href="#hl"/></svg></button><button class="dd" aria-label="突出显示颜色"><svg width="11" height="11"><use href="#chev"/></svg></button>
      <button class="ib"><span class="fc">A</span></button><button class="dd" aria-label="字体颜色"><svg width="11" height="11"><use href="#chev"/></svg></button>
      <button class="ib lst" aria-label="项目符号"><svg width="20" height="18" viewBox="0 0 20 18"><path d="M7 2H20M7 9H20M7 16H20" stroke="#666" stroke-width="1.200"/><g fill="#4a76a5"><circle cx="2" cy="2" r="1.700"/><circle cx="2" cy="9" r="1.700"/><circle cx="2" cy="16" r="1.700"/></g></svg></button><button class="dd" aria-label="项目符号库"><svg width="11" height="11"><use href="#chev"/></svg></button>
      <button class="ib lst nums" aria-label="编号"><span>1<br>2<br>3</span><svg width="12" height="18" viewBox="0 0 12 18"><path d="M0 2H12M0 9H12M0 16H12" stroke="#666" stroke-width="1.200"/></svg></button><button class="dd" aria-label="编号库"><svg width="11" height="11"><use href="#chev"/></svg></button>
    </div>
  </div>
  <button class="mbig wide"><span class="styico"><svg width="26" height="24" viewBox="0 0 26 24"><path d="M2 19 9 2 15 17M5 13H13" fill="none" stroke="#4a7fb8" stroke-width="3"/><use href="#minibrush" x="4" y="0" width="22" height="24"/></svg><svg width="11" height="11"><use href="#chev"/></svg></span><span>样式</span></button>
  <button class="mbig"><svg width="24" height="22"><use href="#comment"/></svg><span>新建<br>批注</span></button>
</div>
<script src="app.js"></script>
</body>
</html>
```
FILE: styles.css
```css
* { box-sizing: border-box; }
body {
  margin: 0; min-height: 100vh; display: flex; flex-direction: column; position: relative; overflow: hidden;
  font-family: "Noto Sans", "Noto Sans CJK SC", sans-serif; font-size: 15px; line-height: 20px; color: #222; background: #e7e7e7;
}
button { font: inherit; color: inherit; background: none; border: 0; padding: 0; margin: 0; display: inline-flex; align-items: center; justify-content: center; }
input { font: inherit; color: inherit; margin: 0; }
a { color: inherit; text-decoration: none; }
svg { display: block; flex: none; }
.defs { position: absolute; width: 0; height: 0; }

/* Title bar and tabs */
.top { background: #2b579a; color: #fff; }
.titlebar { display: grid; grid-template-columns: 1fr auto 1fr; grid-template-rows: 43px; align-items: center; position: relative; }
.quick { display: flex; align-items: center; padding-left: 20px; height: 40px; }
.q { width: 30px; height: 30px; margin-right: 4px; }
.quick .dd { margin: 0 3px 0 -2px; }
.dd { width: 14px; height: 28px; }
.quick .q:last-child { margin-left: 2px; }
.doc-title { font-size: 16px; font-weight: 400; margin: 0; padding-bottom: 2px; }
.account { display: flex; align-items: center; gap: 12px; justify-self: end; margin-right: 243px; padding-bottom: 2px; }
.winctl { display: flex; position: absolute; right: 0; top: 0; height: 38px; }
.winctl button { width: 57px; height: 38px; }
.tabs { display: flex; height: 38px; }
.tab { display: flex; align-items: center; justify-content: center; padding: 0 13px 2px 14px; white-space: nowrap; }
.file { width: 76px; padding: 0 0 2px; }
.cur.tab { background: #f3f3f3; color: #2b579a; width: 55px; padding: 0 0 2px; }
.plus { padding: 0 14px 2px; }
.tell { gap: 15px; margin-left: 8px; }
.notes { margin: 0 18px 0 auto; width: 22px; }

/* Ribbon */
.ribbon { display: flex; height: 117px; background: #f3f3f3; border-bottom: 1px solid #cfcfcf; padding: 5px 0 4px; flex: none; }
.group { position: relative; display: flex; flex-direction: column; border-right: 1px solid #8a8a8a; flex: none; padding-top: 2px; }
.cap { margin-top: auto; text-align: center; height: 18px; line-height: 20px; padding-right: 6px; }
.g-clip .cap { text-align: left; padding-left: 16px; }
.g-lay .cap, .g-add .cap, .g-pdf .cap, .g-edit .cap, .g-plus .cap { padding-right: 0; }
.launch { position: absolute; right: 4px; bottom: 0; width: 12px; height: 12px; }
.tools { display: flex; }
.big { flex-direction: column; justify-content: flex-start; line-height: 19px; width: 52px; }
.big > span { white-space: nowrap; }
.big > span > svg { display: inline-block; }
.big > svg:first-child, .zi, .pdf { margin: 2px 0 1px; }
.big.tpl > svg:first-child { margin-left: 9px; height: 38px; }
.g-clip { width: 100px; }
.g-clip .tools { padding-left: 11px; }
.g-clip .paste > svg:first-child { margin: 0 0 1px 5px; }
.stack { display: flex; flex-direction: column; padding: 1px 0 0 1px; }
.stack button { width: 22px; height: 29px; align-items: flex-start; }
.g-font { width: 430px; }
.rows { padding: 6px 0 0 10px; display: flex; flex-direction: column; gap: 9px; }
.row { display: flex; align-items: center; height: 29px; color: #555; }
.combo { display: flex; align-items: center; background: #fff; border: 1px solid #8a8a8a; height: 29px; width: 57px; margin-right: 4px; padding-right: 2px; }
.combo.wide { width: 138px; margin-right: 2px; }
.combo input { border: 0; outline: 0; background: none; flex: 1; width: 20px; min-width: 0; padding: 0 0 0 2px; color: #333; }
.combo svg { width: 11px; height: 11px; }
.ib { width: 29px; height: 29px; font-size: 17px; position: relative; flex: none; }
.ib.tight { font-size: 15px; margin-left: 1px; }
.tight + .dd { margin-left: -2px; margin-right: 3px; }
.vs { width: 1px; height: 27px; background: #d0d0d0; margin: 0 4px; }
.grow { display: flex; align-items: center; font-weight: 500; font-size: 16px; padding-top: 2px; }
.grow svg { margin-bottom: 14px; }
.wen { flex-direction: column; }
.wen small { font-size: 10px; line-height: 9px; }
.wen b { font-size: 12px; line-height: 12px; color: #4a7fb8; font-weight: 400; }
.boxed { border: 1px solid #4a6f95; width: 20px; line-height: 18px; font-weight: 600; background: #fff; font-size: 17px; }
.it { font-family: "Liberation Serif", serif; font-style: italic; font-size: 18px; }
.un { text-decoration: underline; text-underline-offset: 3px; }
.strike { font-size: 13px; text-decoration: line-through; margin-left: 7px; }
.sub sub, .sub sup { font-size: 9px; color: #4a7fb8; line-height: 10px; }
.sub sub { align-self: flex-end; padding-bottom: 3px; }
.sub sup { align-self: flex-start; padding-top: 2px; }
.fx { color: #fff; font-size: 20px; font-weight: 600; -webkit-text-stroke: 1px #4a86c4; text-shadow: 0 0 2px #9cc4ea; }
.hl small { position: absolute; left: 4px; top: 1px; font-size: 12px; line-height: 14px; }
.g-font .hl, .g-font .ib:has(.fc), .g-font .ib:has(.shade) { margin-left: 6px; }
.fc { border-bottom: 4px solid #e00b0b; width: 20px; line-height: 15px; height: 20px; font-size: 18px; font-weight: 600; }
.shade { background: #bdbdbd; width: 18px; line-height: 18px; font-weight: 600; }
.circ { border: 1px solid #777; border-radius: 50%; width: 18px; height: 18px; font-size: 12px; line-height: 16px; }
.g-plus { width: 124px; }
.g-plus .tools { padding-left: 10px; }
.zi, .pdf { position: relative; display: block; height: 37px; }
.zi { width: 37px; border: 2px solid #444; background: #fff; font: 28px/30px "Noto Sans CJK SC", sans-serif; }
.zi svg { position: absolute; left: 0; top: 0; width: 33px; height: 33px; }
.g-para { width: 360px; }
.rows.end { align-items: flex-end; padding-right: 9px; }
.mark, .ib.on { background: #c6c6c6; border: 1px solid #8a8a8a; }
.lower { align-self: stretch; justify-content: space-between; padding-right: 36px; }
.g-style { width: 508px; padding-left: 11px; }
.gallery { display: flex; width: 484px; height: 75px; background: #fff; border: 1px solid #d0d0d0; }
.st { width: 90px; flex-direction: column; border: 1px solid transparent; padding: 6px; margin: 1px 0; justify-content: flex-end; color: #666; }
.st.on { border: 1px solid #8a8a8a; box-shadow: inset 0 0 0 4px #d0d2ce; }
.pv { width: 76px; overflow: hidden; font: 300 17px/32px "Noto Sans CJK SC", sans-serif; color: #000; text-align: left; white-space: nowrap; height: 32px; }
.h1 { color: #2f5496; font-size: 38px; }
.h2 { color: #2f5496; font-size: 29px; }
.h0 { font-size: 45px; }
.nm { display: flex; align-items: center; gap: 4px; line-height: 20px; white-space: nowrap; }
.more { width: 31px; border: 1px solid #8a8a8a; margin: -1px -1px -1px auto; }
.g-edit { width: 117px; }
.list { display: flex; flex-direction: column; padding-left: 14px; margin-top: -5px; }
.list button { height: 29px; justify-content: flex-start; gap: 4px; }
.list .far { margin-left: 14px; }
.rep { width: 20px; font-size: 12px; line-height: 9px; display: flex; flex-direction: column; }
.rep b { color: #8b5fa8; font-weight: 400; }
.rep i { color: #4a76a5; font-style: normal; font-size: 11px; }
.g-lay { width: 85px; } .g-add { width: 72px; } .g-pdf { width: 81px; }
.g-lay .tools, .g-add .tools, .g-pdf .tools { justify-content: center; }
.g-pdf .cap { white-space: nowrap; }
.pdf { width: 38px; font-size: 13px; line-height: 46px; padding-left: 6px; text-align: left; color: #444; }
.pdf svg { position: absolute; left: 0; top: 0; }
.collapse { flex: 1; display: flex; justify-content: flex-end; align-items: flex-end; padding-right: 10px; }

/* Workspace */
.work { flex: 1; display: flex; padding-right: 16px; position: relative; overflow: hidden; min-height: 400px; }
.left { width: 28px; }
.corner { width: 24px; height: 24px; margin: 4px 0 0 4px; background: #fff; box-shadow: 0 0 0 3px #d6d6d6; padding: 9px; }
.corner i { display: block; width: 7px; height: 8px; border: solid #666; border-width: 0 0 3px 3px; }
.vruler { margin: 7px 0 0 5px; width: 21px; background: #fff; height: 100%; overflow: hidden; font-size: 12px; color: #444; padding-left: 3px; }
.vruler span { display: flex; align-items: center; justify-content: center; width: 18px; height: 26px; writing-mode: vertical-rl; transform: rotate(180deg); background: linear-gradient(#444, #444) center bottom / 8px 1px no-repeat; }
.center { flex: 1; display: flex; flex-direction: column; align-items: center; }
.hruler { position: relative; width: 992px; height: 20px; margin-top: 6px; background: linear-gradient(90deg, #c6c6c6 150px, #fff 150px 842px, #c6c6c6 842px); font-size: 13px; line-height: 20px; color: #444; }
.hruler .clip { overflow: hidden; }
.hruler .strip { display: grid; grid-template-columns: repeat(28, 1fr); width: 1027px; margin-left: -15px; }
.hruler span { height: 20px; text-align: center; white-space: nowrap; background: linear-gradient(#555, #555) 25% 50% / 1px 8px no-repeat, linear-gradient(#555, #555) 75% 50% / 1px 8px no-repeat; }
.grip { position: absolute; left: 144px; top: -3px; }
.grip.r { left: 836px; top: 12px; }
.page { width: 992px; flex: 1; margin-top: 9px; background: #fff; border: solid #c6c6c6; border-width: 0 1px; padding-left: 149px; }
.sheet { position: relative; height: 294px; }
.para { margin: 0; height: 44px; }
.gantt { border-collapse: collapse; table-layout: fixed; width: 691px; font-size: 8px; line-height: 10px; color: #555; text-align: center; }
.gantt td, .gantt th { border: 1px solid #000; padding: 0; font-weight: 400; height: 22px; overflow: hidden; white-space: nowrap; }
.gantt thead th { background: #92cddc; border-top: 0; color: #35606b; }
.gantt thead tr:first-child th { height: 7px; }
.gantt thead tr:nth-child(2) th { border-top: 1px solid #000; height: 21px; }
.gantt th[rowspan] { vertical-align: top; padding-top: 1px; line-height: 11px; }
.gantt td.how, .gantt th.how { white-space: normal; border-right: 0; }
.c-phase { width: 27px; } .c-step { width: 52px; } .c-who { width: 31px; } .c-how { width: 52px; }
.gantt .phase { background: #92cddc; font-size: 15px; color: #111; }
.gantt .step { background: #92cddc; color: #111; font-weight: 700; }
.gantt .red { background-color: #d08c8b; } .gantt .blue { background-color: #4676b3; } .gantt .green { background-color: #d7e3bc; }
.gantt .green { border-bottom-color: #d7e3bc; }
.gantt .green ~ .green { border-left-color: #8d9a70; }
.gantt .last .green { border-bottom-color: #000; }
.gantt .bar { background-image: repeating-linear-gradient(90deg, #222 0 4px, transparent 4px 6px), linear-gradient(#333, #333); background-position: 0 6px, 0 15px; background-size: 100% 2px, 100% 1px; background-repeat: no-repeat; }
.gantt .tail td { border: 0; border-left: 1px solid #ccc; }
.rowend { position: absolute; left: 690px; top: 259px; }
.call { position: absolute; font-size: 12px; filter: drop-shadow(1px 1px 1px #8899aa); }
.call.d { left: 345px; top: 123px; } .call.c { left: 492px; top: 152px; } .call.a { left: 575px; top: 172px; }
.caption { position: absolute; left: 0; right: 0; bottom: 9px; text-align: center; font: 700 62px/72px "Noto Sans CJK SC", sans-serif; color: #fff; -webkit-text-stroke: 2px #222; }

/* Status bar */
.status { display: flex; align-items: center; height: 28px; background: #f3f3f3; border: solid #b9bcc2; border-width: 1px 0; padding: 0 10px 0 13px; white-space: nowrap; flex: none; }
.s2 { margin-left: 24px; } .s3 { margin-left: 24px; } .s4 { margin-left: 20px; } .s5 { margin-left: 27px; } .s6 { margin: 0 2px 0 23px; }
.grow-x { flex: 1; }
.status > .v1 { margin-left: 16px; }
.view { width: 50px; height: 26px; }
.view.on { background: #c8c8c8; }
.zoomb { width: 20px; height: 26px; }
.zoom { appearance: none; width: 126px; height: 20px; background: linear-gradient(#444, #444) center / 100% 1px no-repeat; margin: 0 0 0 2px; }
.zoom::-webkit-slider-thumb { appearance: none; width: 6px; height: 14px; background: #444; }
.pct { width: 51px; text-align: right; }

/* Taskbar */
.taskbar { height: 59px; flex: none; position: relative; display: flex; justify-content: center; background: linear-gradient(90deg, #e1eff7 0, #e3f1f9 340px, #d4e3fa 430px, #d8dff5 560px, #d6e1f8 800px, #d7ddee 1050px, #d4e2fb 1200px, #d8dcee 1400px, #e0eef8 1560px, #e2effa); }
.apps { display: flex; gap: 7px; padding-top: 5px; }
.apps button { width: 48px; height: 48px; border-radius: 5px; position: relative; }
.apps .cur { background: #eef3fc; }
.apps .run::after { content: ""; position: absolute; bottom: 0; left: 20px; width: 8px; height: 4px; border-radius: 2px; background: #7d8798; }
.apps .cur::after { left: 14px; width: 20px; background: #1a6fc4; }
.apps text { font: 700 13px "Noto Sans", sans-serif; fill: #fff; }
.tray { position: absolute; right: 25px; top: 0; height: 58px; display: flex; align-items: center; color: #1b1b1b; }
.tray > svg:first-child { margin-right: 25px; }
.ime { font-size: 19px; margin-left: 22px; }
.ime + .ime { margin-left: 29px; }
.sys { display: flex; gap: 10px; margin-left: 28px; }
.clock { font-size: 14px; line-height: 20px; text-align: right; width: 80px; }

/* Context menu, tooltip and mini toolbar */
.menu, .mini { position: absolute; left: 668px; background: #fff; border: 1px solid #8f8f8f; border-radius: 6px; box-shadow: 0 6px 14px rgba(0, 0, 0, .16); }
.menu { top: 92px; width: 279px; height: 485px; padding: 5px 0 0; display: flex; flex-direction: column; }
.find { height: 30px; margin: 0 6px 5px; border: 1px solid #b5b5b5; padding: 0 7px 2px; }
.find::placeholder { color: #666; opacity: 1; }
.mi { height: 30px; flex: none; justify-content: flex-start; padding-left: 5px; text-align: left; }
.mi > :first-child { width: 20px; margin-right: 15px; display: flex; justify-content: center; font-style: normal; }
.off { color: #ababab; }
.ga { font-weight: 700; color: #555; font-size: 17px; }
.ja { font: 700 10px "Noto Sans CJK JP", sans-serif; fill: #18803a; }
.la { font: 700 13px "Noto Sans", sans-serif; fill: #2b7cb8; }
.sub-arrow { margin: 0 12px 0 auto; }
.mh { height: 28px; display: flex; align-items: center; background: linear-gradient(90deg, #fff 30px, #ececec 30px); margin-right: 1px; padding-left: 6px; gap: 14px; color: #555; flex: none; }
.opts { display: flex; padding-left: 31px; height: 39px; flex: none; }
.opts button { width: 38px; }
.opts .on { background: #dedede; }
.menu hr { border: 0; border-top: 1px solid #e0e0e0; margin: 0 2px 2px 40px; flex: none; }
u { text-underline-offset: 2px; }
.tip { position: absolute; left: 775px; top: 272px; height: 33px; padding: 0 5px; line-height: 31px; background: #fff; border: 1px solid #8f8f8f; border-radius: 5px; color: #555; box-shadow: 0 5px 12px rgba(0, 0, 0, .18); }
.cursor { position: absolute; left: 802px; top: 245px; }
.mini { top: 596px; width: 374px; height: 85px; display: flex; padding: 5px 4px; }
.mrows { display: flex; flex-direction: column; gap: 8px; width: 273px; padding-top: 1px; flex: none; }
.mini .combo { width: 94px; margin: 0; height: 30px; }
.mini .num { width: 67px; margin: 0 3px 0 -1px; }
.mini .mrows .ib { width: 28px; }
.mini .row { height: 30px; }
.mini .hl, .mini .ib:has(.fc) { margin-left: 1px; }
.mini .lst { margin-left: 5px; }
.nums { gap: 4px; }
.nums span { font-size: 8px; line-height: 7px; color: #4a76a5; }
.mbig { flex-direction: column; width: 43px; border-left: 1px solid #ddd; justify-content: flex-start; padding-top: 4px; line-height: 19px; }
.mbig.wide { width: 51px; }
.mbig > span:last-child { margin-top: 5px; }
.styico { display: flex; align-items: center; gap: 4px; padding-left: 5px; }
.mbig.wide > span:last-child { margin-top: 3px; }
```
FILE: app.js
```js
const el = (tag, cls, text) => {
  const n = document.createElement(tag);
  if (cls) n.className = cls;
  if (text !== undefined) n.textContent = text;
  return n;
};

// Rulers
const v = document.getElementById('vruler');
for (let i = 2; i <= 30; i++) v.append(el('span', '', i));

const h = document.getElementById('hruler');
const clip = el('div', 'clip');
const strip = el('div', 'strip');
for (let i = -8; i <= 46; i += 2) strip.append(el('span', '', i === 0 || i === 38 || i === 46 ? '' : Math.abs(i)));
clip.append(strip);
h.prepend(clip);

// Gantt header
const head = document.getElementById('ghead');
const r1 = el('tr'), r2 = el('tr');
const span = (n, key, val) => { n[key] = val; return n; };
r1.append(span(el('th', '', '重点'), 'rowSpan', 2), el('th'));
r2.append(el('th', '', '时间'));
for (let m = 0; m < 7; m++) {
  r1.append(span(el('th'), 'colSpan', 4));
  for (let w = 1; w <= 4; w++) r2.append(el('th', '', w + '周'));
}
r1.append(span(el('th', '', '负责人'), 'rowSpan', 2), span(el('th', 'how', '使用方法'), 'rowSpan', 2));
head.append(r1, r2);

// Gantt rows: phase, rows it covers, step, method, filled weeks, weeks that carry a bar
const rows = [
  ['P', 6, '主题选定', '头脑风暴'],
  ['', 0, '计划拟定', '头脑风暴、甘特图'],
  ['', 0, '现况把握', '检查表、柏拉图'],
  ['', 0, '目标设定', '条形图'],
  ['', 0, '解析', '鱼骨图、柏拉图'],
  ['', 0, '对策拟定', '头脑风暴、小组讨论'],
  ['D', 1, '实施与检讨', 'PDCA', 'red', 10, 20, 10, 20],
  ['C', 1, '效果确认', '柏拉图、雷达图', 'blue', 20, 26, 20, 26],
  ['A', 2, '标准化', '头脑风暴、小组讨论', 'green', 26, 28, 26, 27],
  ['', 0, '检讨与改进', '小组讨论', 'green', 26, 28, 27, 28],
];
const body = document.getElementById('gbody');
for (const [phase, n, step, how, color, from, to, barFrom, barTo] of rows) {
  const tr = el('tr', step === '检讨与改进' ? 'last' : '');
  if (n) tr.append(span(el('td', 'phase', phase), 'rowSpan', n));
  tr.append(el('td', 'step', step));
  for (let w = 0; w < 28; w++) {
    const fill = color && w >= from && w < to ? color : '';
    tr.append(el('td', fill + (fill && w >= barFrom && w < barTo ? ' bar' : '')));
  }
  tr.append(el('td'), el('td', 'how', how));
  body.append(tr);
}
const tail = el('tr', 'tail');
for (let i = 0; i < 32; i++) tail.append(el('td'));
body.append(tail);
```
